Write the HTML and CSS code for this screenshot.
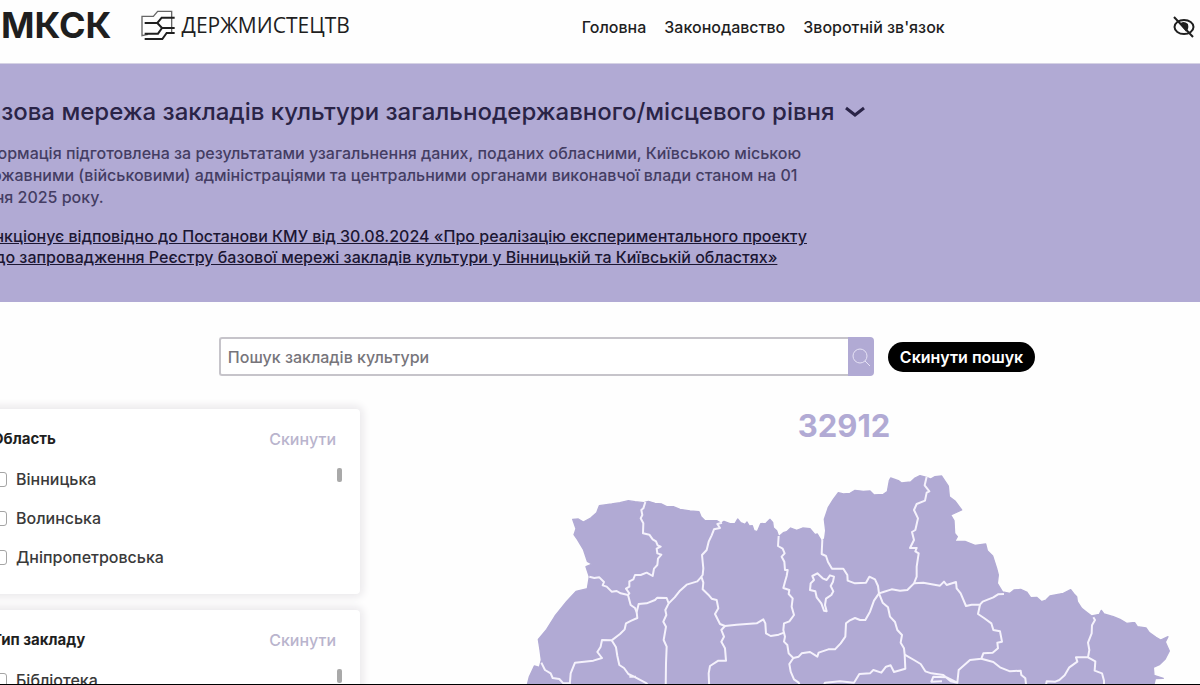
FILE: index.html
```html
<!DOCTYPE html>
<html lang="uk">
<head>
    <meta charset="UTF-8">
    <meta name="viewport" content="width=device-width, initial-scale=1.0">
    <title>Базова мережа закладів культури</title>
    <link rel="stylesheet" href="styles.css">
</head>
<body>
    <div class="page">
        <!-- Header -->
        <header class="header">
            <a href="#" class="logo">МКСК</a>
            <a href="#" class="partner">
                <svg class="partner-icon" viewBox="0 0 108 96" aria-hidden="true">
                    <path class="thin" d="M24 76L6 80V22H40L53 7H95V72"/>
                    <path d="M14 42H52L65 26H104M52 42L66 57H104M66 57L54 74H14M14 90H67L80 72H104"/>
                </svg>
                <span>ДЕРЖМИСТЕЦТВ</span>
            </a>
            <nav class="nav">
                <a href="#">Головна</a>
                <a href="#">Законодавство</a>
                <a href="#">Зворотній зв'язок</a>
            </nav>
            <button class="vision" type="button" aria-label="Версія для людей з порушенням зору">
                <svg viewBox="0 0 24 24" aria-hidden="true">
                    <ellipse cx="12" cy="12" rx="9.5" ry="7"/>
                    <path class="pupil" d="M9 9Q12 7 15 9.500Q16 13 14 15Z"/>
                    <path d="M2 2L21 22"/>
                </svg>
            </button>
        </header>

        <!-- Banner -->
        <section class="banner">
            <h1>Базова мережа закладів культури загальнодержавного/місцевого рівня
                <svg class="chevron" viewBox="0 0 20 12" aria-hidden="true"><path d="M1 2L10 9L19 2"/></svg>
            </h1>
            <p>Інформація підготовлена за результатами узагальнення даних, поданих обласними, Київською міською<br>державними (військовими) адміністраціями та центральними органами виконавчої влади станом на 01<br>січня 2025 року.</p>
            <a href="#" class="decree">Функціонує відповідно до Постанови КМУ від 30.08.2024 «Про реалізацію експериментального проекту<br>щодо запровадження Реєстру базової мережі закладів культури у Вінницькій та Київській областях»</a>
        </section>

        <!-- Search -->
        <form class="search">
            <div class="search-box">
                <input type="text" placeholder="Пошук закладів культури" aria-label="Пошук закладів культури">
                <button class="search-button" type="button" aria-label="Пошук">
                    <svg viewBox="0 0 20 20" aria-hidden="true"><circle cx="9" cy="9" r="7"/><path d="M14 14L19 19"/></svg>
                </button>
            </div>
            <button class="reset" type="reset">Скинути пошук</button>
        </form>

        <main class="content">
            <aside class="filters">
                <section class="filter">
                    <div class="filter-head">
                        <h2>Область</h2>
                        <button type="button">Скинути</button>
                    </div>
                    <div class="options">
                        <div class="list">
                            <label><input type="checkbox">Вінницька</label>
                            <label><input type="checkbox">Волинська</label>
                            <label><input type="checkbox">Дніпропетровська</label>
                        </div>
                        <span class="thumb"></span>
                    </div>
                </section>
                <section class="filter">
                    <div class="filter-head">
                        <h2>Тип закладу</h2>
                        <button type="button">Скинути</button>
                    </div>
                    <div class="options">
                        <div class="list">
                            <label><input type="checkbox">Бібліотека</label>
                        </div>
                        <span class="thumb"></span>
                    </div>
                </section>
            </aside>

            <!-- Map -->
            <div class="map">
                <p class="total">32912</p>
                <svg class="regions" viewBox="-36 0 2136 690" role="img" aria-label="Карта областей">
                    <path class="land" d="M218 178L235 177L250 186L272 174L290 158L298 137L335 132L360 128L385 122L405 125L432 128L445 124L465 130L485 132L500 140L520 140L540 148L570 153L597 155L603 170L615 182L650 182L663 190L672 184L690 191L705 191L713 177L722 188L735 193L741 186L748 198L757 197L762 212L772 215L782 191L798 190L810 178L818 187L820 203L830 212L836 230L850 218L860 215L872 204L890 211L908 204L930 206L945 224L952 222L965 244L974 236L977 212L973 178L985 142L1000 118L1015 98L1030 102L1050 100L1065 91L1090 94L1110 93L1122 105L1150 103L1162 95L1168 62L1172 54L1195 62L1205 69L1232 66L1245 54L1260 47L1280 52L1292 57L1305 50L1325 48L1333 60L1345 78L1348 110L1366 124L1385 150L1352 165L1362 182L1364 220L1372 230L1364 244L1395 244L1425 256L1457 252L1462 272L1478 288L1490 325L1495 345L1492 370L1508 396L1530 400L1542 390L1562 388L1580 396L1592 413L1610 412L1625 425L1638 420L1650 408L1690 400L1712 389L1722 402L1730 410L1732 425L1745 445L1762 458L1775 468L1798 463L1804 451L1812 462L1840 470L1860 478L1880 490L1898 488L1904 488L1912 500L1938 504L1948 518L1968 532L1982 540L2004 530L1996 546L2008 573L1995 598L1978 614L1960 622L1962 646L1990 655L1966 656L1958 690H78L88 650L103 618L118 622L124 600L120 570L115 538L140 508L165 468L200 424L228 394L262 386L268 350L258 320L276 312L262 304L250 268L232 238L222 224L228 206Z"/>
                    <g class="borders">
                        <path d="M436 126L430 145L424 150L427 165L422 175L430 190L429 220L448 224L458 238L468 244L473 256L482 260L470 266L472 280L484 284L474 296L472 315L462 326L458 348L440 338L422 345L405 345L400 358L388 364L388 380L378 386L388 400L384 405L392 435L405 444L410 456"/>
                        <path d="M268 350L283 354L298 352L312 366L308 376L320 380L335 395L350 393L362 400L384 405"/>
                        <path d="M410 456L416 432L440 430L465 420L472 413L500 414L506 430L496 450L499 465L490 485L498 500L491 540L500 560L498 610L497 690"/>
                        <path d="M410 456L412 474L394 482L378 490L374 508L360 522L335 541L306 540L302 560L292 576L306 594L280 602L225 608L212 640L208 690"/>
                        <path d="M335 541L348 562L352 588L358 615L372 624L385 642L402 650L440 670L450 690M388 650H408"/>
                        <path d="M124 608L135 630L152 640L158 654L178 657L190 670L208 670"/>
                        <path d="M506 430L524 412L540 392L560 374L592 364L600 355L608 345L610 325L606 285L620 270L626 245L635 226L642 208L660 204L652 192L666 188M604 350L610 368L608 388L625 404L635 416L650 420L655 445L645 462L654 480L660 492L675 498L710 494L770 490L790 478L796 490L798 520L812 528L836 524L852 518"/>
                        <path d="M675 498L664 510L672 530L664 545L675 565L678 602L655 602L630 618L626 640L628 690"/>
                        <path d="M836 228L834 258L848 266L854 280L845 290L853 305L855 330L863 330L860 348L855 365L850 384L868 390L866 402L878 415L875 440L882 465L868 484L852 490L850 510L855 530L852 545L862 555L866 580L880 594L868 612L872 635L882 658L896 668L905 690"/>
                        <path d="M967 238L965 282L978 288L984 306L996 326L1030 326L1042 345L1043 362L1065 370L1098 368L1108 350L1125 358L1134 378L1137 400L1150 396L1175 388L1200 392L1222 390L1242 370L1250 350L1250 320L1256 280L1246 274L1250 264L1230 264L1242 240L1236 216L1246 210L1254 175L1242 150L1250 132L1275 122L1280 98L1288 94L1274 76L1280 50"/>
                        <path d="M937 348L952 340L968 355L980 360L990 346L1002 350L999 365L992 378L1000 394L994 405L978 416L975 435L980 454L972 452L964 430L950 412L946 394L930 390L932 370L942 360Z"/>
                        <path d="M1137 400L1122 422L1110 455L1096 480L1080 480L1065 474L1048 482L1038 490L1036 530L1022 550L1005 568L985 568L956 578L952 590L930 576L905 580L896 590L880 594"/>
                        <path d="M1137 400L1148 428L1164 442L1170 470L1185 486L1192 510L1206 525L1202 548L1212 565L1214 584L1216 626L1182 636L1172 616L1158 620L1144 638L1120 630L1110 640L1078 642L1062 668L1020 664L975 668L965 690"/>
                        <path d="M1242 370L1270 368L1320 377L1332 365L1340 375L1368 366L1370 385L1382 400L1398 438L1415 434L1440 434L1448 425L1480 412L1494 403L1512 402"/>
                        <path d="M1440 434L1434 462L1452 474L1474 490L1480 510L1500 514L1506 545L1492 548L1494 565L1478 578L1450 580L1444 596L1410 600L1376 630L1372 668L1352 664L1330 645L1294 640L1276 634L1262 612L1242 600L1214 584M1372 668L1340 652L1300 650L1294 665L1326 664"/>
                        <path d="M1444 596L1480 606L1500 622L1530 634L1562 632L1564 645L1576 655L1580 690"/>
                        <path d="M1780 472L1785 480L1776 496L1775 520L1764 548L1768 570L1764 592L1728 592L1732 605L1708 622L1694 646L1678 660L1666 665L1640 664L1635 690M1764 592L1786 604L1784 632L1806 640L1812 662V690"/>
                    </g>
                </svg>
            </div>
        </main>
    </div>
</body>
</html>
```

FILE: styles.css
```css
* {
    box-sizing: border-box;
}

body {
    margin: 0;
    height: 100vh;
    overflow: hidden;
    border-bottom: 1px solid #000;
    background-color: #fefefe;
    color: #1f1f1f;
    font-family: Inter, 'Noto Sans', sans-serif;
}

a {
    color: inherit;
    text-decoration: none;
}

button {
    padding: 0;
    border: none;
    background: none;
    font-family: inherit;
    cursor: pointer;
}

svg {
    display: block;
    fill: none;
}

/* Content starts past the left edge of the window */
.page {
    margin-left: -28px;
}

/* Header */
.header {
    display: flex;
    align-items: center;
    height: 64px;
    padding: 0 4px 10px 29px;
    border-bottom: 1px solid #d5d2e4;
}

.logo,
.partner {
    padding-bottom: 4px;
}

.logo {
    font-size: 36px;
    font-weight: 700;
}

.partner {
    display: flex;
    align-items: center;
    gap: 6px;
    margin-left: 28px;
    font-family: 'Open Sans', sans-serif;
    font-size: 21px;
}

.partner-icon {
    width: 36px;
    height: 32px;
    stroke: #1f1f1f;
    stroke-width: 6;
}

.partner-icon .thin {
    stroke: #666;
    stroke-width: 4;
}

.nav {
    display: flex;
    gap: 18px;
    margin-left: 232px;
    font-size: 16px;
    font-weight: 500;
}

.vision {
    margin-left: auto;
}

.vision svg {
    width: 24px;
    height: 24px;
    stroke: #1f1f1f;
    stroke-width: 2;
}

.vision .pupil {
    fill: #1f1f1f;
}

/* Banner */
.banner {
    height: 238px;
    padding-top: 32px;
    background-color: #b1aad4;
    white-space: nowrap;
}

.banner h1 {
    display: flex;
    align-items: center;
    gap: 10px;
    margin: 0 0 14px;
    color: #2a2447;
    font-size: 24px;
    font-weight: 500;
    line-height: 32px;
}

.chevron {
    width: 20px;
    height: 12px;
    stroke: #2a2447;
    stroke-width: 3;
}

.banner p {
    margin: 0 0 18px;
    color: #443d63;
    font-size: 16px;
    font-weight: 500;
    line-height: 22px;
}

.decree {
    color: #1c1733;
    font-size: 16px;
    font-weight: 500;
    line-height: 21px;
    text-decoration: underline;
}

/* Search */
.search {
    display: flex;
    align-items: center;
    justify-content: center;
    gap: 14px;
    padding: 35px 0 33px 82px;
}

.search-box {
    display: flex;
    width: 655px;
    height: 39px;
}

.search-box input {
    flex: 1;
    padding: 0 7px;
    border: 2px solid #c6c4ca;
    border-right: none;
    border-radius: 3px 0 0 3px;
    font-family: inherit;
    font-size: 16px;
    font-weight: 500;
}

.search-box input::placeholder {
    color: #77757b;
}

.search-button {
    padding: 0 3px;
    border-radius: 0 4px 4px 0;
    background-color: #b1aad4;
}

.search-button svg {
    width: 20px;
    height: 20px;
    stroke: #e6e2f5;
    stroke-width: 1;
}

.reset {
    height: 30px;
    padding: 0 12px;
    border-radius: 15px;
    background-color: #000;
    color: #fff;
    font-size: 16px;
    font-weight: 600;
}

/* Filters */
.content {
    display: flex;
    gap: 128px;
}

.filters {
    width: 388px;
}

.filter {
    height: 185px;
    margin-bottom: 16px;
    padding: 19px 18px 0 20px;
    border-radius: 4px;
    background-color: #fff;
    box-shadow: 0 0 8px 3px #e9e7ea;
}

.filter-head {
    display: flex;
    align-items: center;
    justify-content: space-between;
    padding-right: 6px;
}

.filter-head h2 {
    margin: 0;
    font-size: 15px;
    font-weight: 700;
    line-height: 22px;
}

.filter-head button {
    color: #b9b4cd;
    font-size: 16px;
    font-weight: 500;
}

.options {
    display: flex;
    justify-content: space-between;
    margin-top: 18px;
}

.options label {
    display: flex;
    align-items: center;
    gap: 9px;
    height: 22px;
    margin-bottom: 17px;
    color: #3a3a3a;
    font-size: 16px;
    font-weight: 500;
}

.options input {
    appearance: none;
    width: 15px;
    height: 15px;
    margin: 0;
    border: 1px solid #a5a5a5;
    border-radius: 3px;
    background-color: #fff;
}

.thumb {
    width: 5px;
    height: 14px;
    border-radius: 2px;
    background-color: #a9a9a9;
}

/* Map */
.map {
    flex: 1;
}

.total {
    margin: 0 0 18px;
    color: #b1aad4;
    font-size: 31px;
    font-weight: 700;
    line-height: 33px;
    text-align: center;
}

.regions {
    width: 100%;
}

.land {
    fill: #b1aad4;
    stroke: #b1aad4;
    stroke-linejoin: round;
    stroke-width: 4;
}

.borders {
    stroke: #f5f2fc;
    stroke-linejoin: round;
    stroke-width: 6;
}
```
